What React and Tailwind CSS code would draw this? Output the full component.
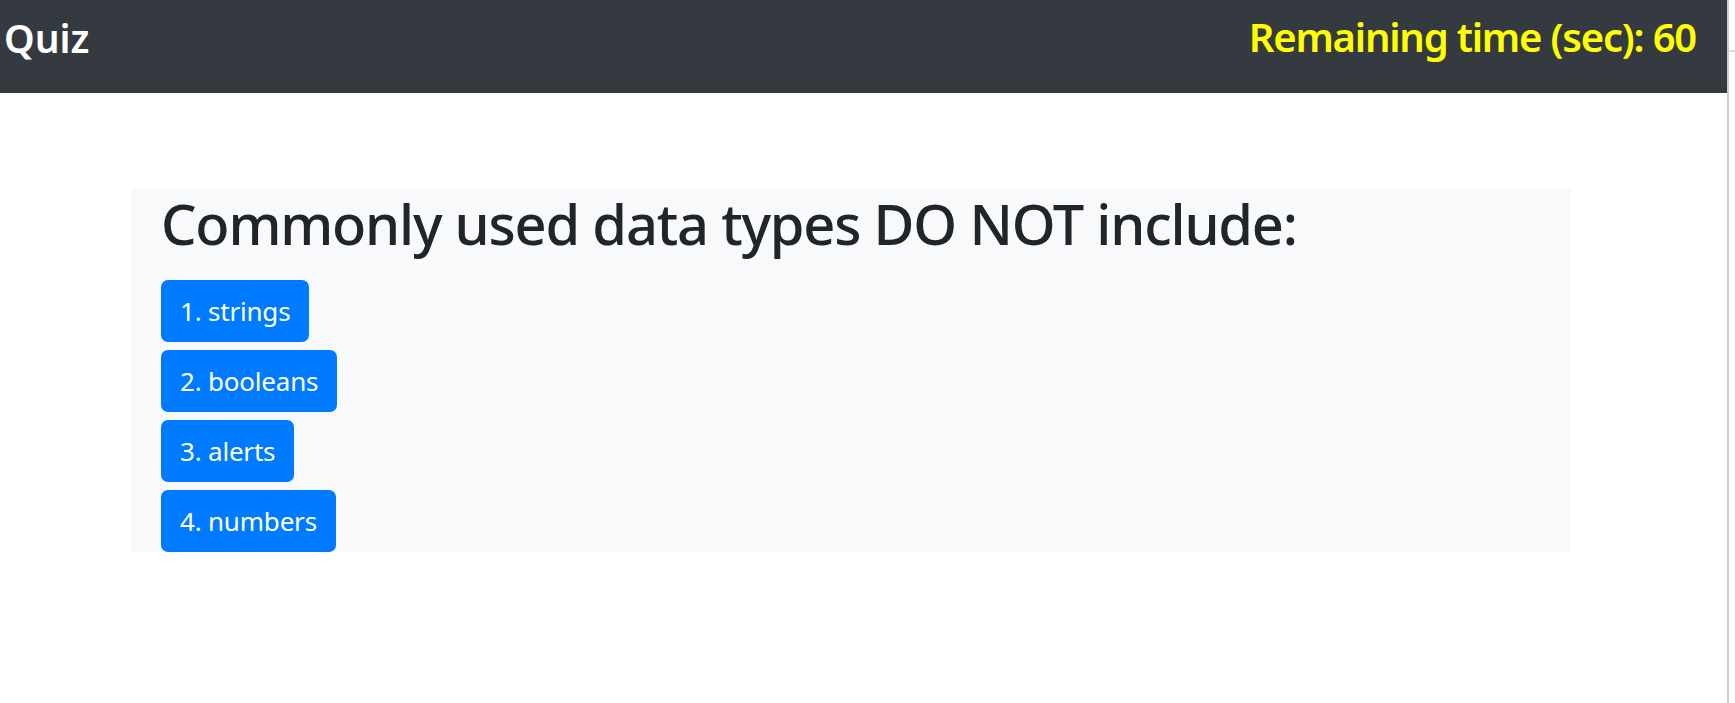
import React from 'react'

const answers = ['1. strings', '2. booleans', '3. alerts', '4. numbers']

function App() {
    return (
        <div className="flex h-[703px] w-[1735px] bg-white overflow-hidden" style={{ fontFamily: '"Noto Sans", "Open Sans", sans-serif' }}>
            <div className="w-[1727px] shrink-0">
                <header className="flex h-[93px] items-center justify-between bg-[#343a40] pb-[19px] pl-[4px] pr-[31px]">
                    <span className="text-[39px] font-semibold leading-none text-white">Quiz</span>
                    <span className="text-[40px] font-semibold leading-none tracking-[-1.2px] text-[#ffff00]">Remaining time (sec): 60</span>
                </header>
                <main className="ml-[131px] mt-[96px] w-[1440px] bg-[#f8f9fa] pl-[30px]">
                    <h1 className="pt-[1px] pb-[23px] text-[56px] font-medium leading-[1.2] tracking-[-1.2px] text-[#212529]">
                        Commonly used data types DO NOT include:
                    </h1>
                    <div className="flex flex-col items-start gap-[8px]">
                        {answers.map((a) => (
                            <button
                                key={a}
                                className="h-[62px] rounded-[7px] bg-[#007bff] px-[19px] text-[26px] leading-none tracking-[-0.2px] text-white"
                            >
                                {a}
                            </button>
                        ))}
                    </div>
                </main>
            </div>
            <div className="h-full w-[8px] border-l-2 border-[#cccccc] bg-white">
                <div className="mt-[50px] h-[2px] w-full bg-[#dddddd]" />
            </div>
        </div>
    )
}

export default App
